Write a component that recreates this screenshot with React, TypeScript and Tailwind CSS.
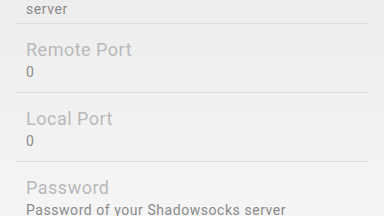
import React from "react";

const items = [
  { title: "Remote Port", summary: "0" },
  { title: "Local Port", summary: "0" },
  { title: "Password", summary: "Password of your Shadowsocks server" },
];

export default function App() {
  return (
    <div
      className="w-[384px] h-[216px] overflow-hidden bg-gradient-to-b from-[#ededed] to-[#f5f5f5]"
      style={{ fontFamily: "Roboto, 'Noto Sans', sans-serif" }}
    >
      <div className="h-6 px-[26px]">
        <div className="-mt-px text-[14px] leading-[20px] tracking-[0.55px] text-[#8a8a8a]">server</div>
      </div>
      {items.map((it) => (
        <div key={it.title}>
          <div className="mx-4 h-px bg-[#dcdcdc]" />
          <div className="px-[26px] pt-[14px] pb-[10px]">
            <div className="text-[18px] leading-[24px] tracking-[0.5px] text-[#b9b9b9]">{it.title}</div>
            <div className="text-[14px] leading-[20px] tracking-[0.55px] text-[#8a8a8a]">{it.summary}</div>
          </div>
        </div>
      ))}
    </div>
  );
}
